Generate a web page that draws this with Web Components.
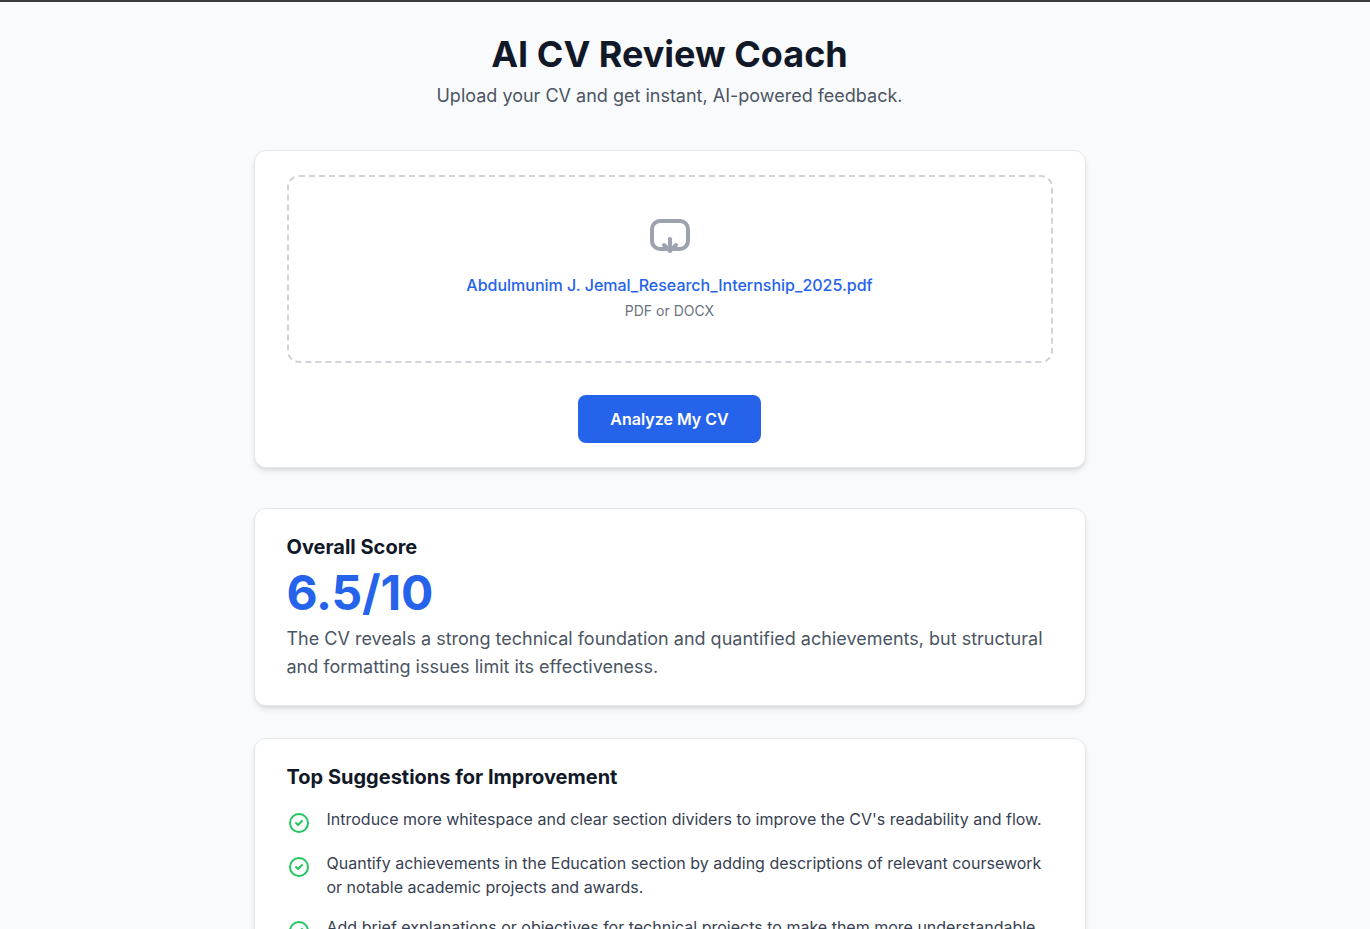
<!DOCTYPE html>
<html lang="en">
<head>
<meta charset="utf-8">
<title>AI CV Review Coach</title>
<style>
html, body { margin: 0; height: 100%; overflow: hidden; }
body { background: #f9fafb; color: #111827; font-family: Inter, "Liberation Sans", sans-serif; font-size: 16px; line-height: 24px; }
</style>
</head>
<body>
<cv-app>
  <cv-header>AI CV Review Coach<span slot="subtitle">Upload your CV and get instant, AI-powered feedback.</span></cv-header>
  <cv-card class="first">
    <cv-dropzone>Abdulmunim J. Jemal_Research_Internship_2025.pdf<span slot="hint">PDF or DOCX</span></cv-dropzone>
    <cv-button>Analyze My CV</cv-button>
  </cv-card>
  <cv-card heading="Overall Score">
    <cv-score value="6.5/10">The CV reveals a strong technical foundation and quantified achievements, but structural and formatting issues limit its effectiveness.</cv-score>
  </cv-card>
  <cv-card heading="Top Suggestions for Improvement">
    <cv-list>
      <cv-suggestion>Introduce more whitespace and clear section dividers to improve the CV's readability and flow.</cv-suggestion>
      <cv-suggestion>Quantify achievements in the Education section by adding descriptions of relevant coursework or notable academic projects and awards.</cv-suggestion>
      <cv-suggestion>Add brief explanations or objectives for technical projects to make them more understandable</cv-suggestion>
    </cv-list>
  </cv-card>
</cv-app>
<script>
const define = (name, render) => customElements.define(name, class extends HTMLElement {
  connectedCallback() {
    if (!this.shadowRoot) this.attachShadow({ mode: 'open' }).innerHTML = render(this);
  }
});

define('cv-app', () => `
<style>
:host { display: block; box-sizing: border-box; border-top: 2px solid #3c3c3f; padding: 32px 31px 0 0; height: 929px; overflow: hidden; }
main { width: 832px; margin: 0 auto; display: flex; flex-direction: column; gap: 32px; }
::slotted(.first) { margin: 8px 0; }
</style>
<main><slot></slot></main>`);

define('cv-header', () => `
<style>
:host { display: block; text-align: center; }
h1 { margin: 0 0 8px; font-size: 36px; line-height: 40px; font-weight: 700; }
p { margin: 0; font-size: 18px; line-height: 28px; color: #4b5563; }
</style>
<h1><slot></slot></h1><p><slot name="subtitle"></slot></p>`);

define('cv-card', el => `
<style>
:host { display: block; box-sizing: border-box; background: #fff; border: 1px solid #e5e7eb; border-radius: 12px; padding: 24px 32px; box-shadow: 0 4px 6px -1px rgb(0 0 0 / .1), 0 2px 4px -2px rgb(0 0 0 / .1); }
h2 { margin: 0; font-size: 20px; line-height: 28px; font-weight: 700; }
</style>
${el.hasAttribute('heading') ? `<h2>${el.getAttribute('heading')}</h2>` : ''}<slot></slot>`);

define('cv-dropzone', () => `
<style>
:host { display: flex; flex-direction: column; align-items: center; border: 2px dashed #d1d5db; border-radius: 12px; padding: 40px; }
svg { display: block; width: 48px; height: 48px; color: #9ca3af; }
.file { margin-top: 8px; font-weight: 500; color: #2563eb; }
.hint { margin-top: 4px; font-size: 14px; line-height: 20px; color: #6b7280; }
</style>
<svg viewBox="0 0 24 24" fill="none" stroke="currentColor" stroke-width="2" stroke-linecap="round" stroke-linejoin="round"><path d="M7 16a4 4 0 0 1-4-4V6a4 4 0 0 1 4-4h10a4 4 0 0 1 4 4v6a4 4 0 0 1-4 4H7z"/><path d="M12 11v6M9 14l3 3 3-3"/></svg>
<div class="file"><slot></slot></div><div class="hint"><slot name="hint"></slot></div>`);

define('cv-button', () => `
<style>
:host { display: flex; justify-content: center; margin-top: 32px; }
button { margin: 0; border: 0; border-radius: 8px; padding: 12px 32px; background: #2563eb; color: #fff; font: inherit; font-weight: 600; }
</style>
<button type="button"><slot></slot></button>`);

define('cv-score', el => `
<style>
:host { display: block; margin-top: 8px; }
.value { font-size: 48px; line-height: 48px; font-weight: 700; letter-spacing: -0.2px; color: #2563eb; }
p { margin: 8px 0 0; font-size: 18px; line-height: 28px; color: #4b5563; }
</style>
<div class="value">${el.getAttribute('value')}</div><p><slot></slot></p>`);

define('cv-list', () => `
<style>
:host { display: flex; flex-direction: column; gap: 16px; margin-top: 16px; }
</style>
<slot></slot>`);

define('cv-suggestion', () => `
<style>
:host { display: flex; align-items: flex-start; gap: 16px; color: #374151; }
svg { flex: none; display: block; width: 24px; height: 24px; margin-top: 4px; color: #22c55e; }
</style>
<svg viewBox="0 0 24 24" fill="none" stroke="currentColor" stroke-width="2" stroke-linecap="round" stroke-linejoin="round"><path d="M9 12l2 2 4-4"/><circle cx="12" cy="12" r="9"/></svg>
<span><slot></slot></span>`);
</script>
</body>
</html>
